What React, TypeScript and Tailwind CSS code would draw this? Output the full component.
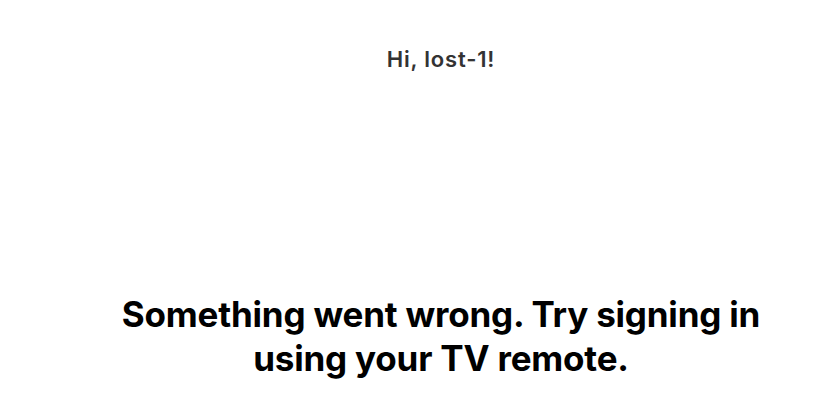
import React from 'react'

const App = () => {
  return (
    <div
      className="min-h-[409px] w-full bg-white flex flex-col items-center pl-[46px]"
      style={{ fontFamily: 'Inter, "Noto Sans", sans-serif' }}
    >
      <div className="pt-[45px] text-[22px] leading-[28px] font-semibold text-[#333] tracking-[0.8px]">
        Hi, lost-1!
      </div>
      <h1 className="mt-[219px] max-w-[680px] text-center text-[35px] leading-[44px] font-bold text-black tracking-[-0.2px]">
        Something went wrong. Try signing in using your TV remote.
      </h1>
    </div>
  )
}

export default App
